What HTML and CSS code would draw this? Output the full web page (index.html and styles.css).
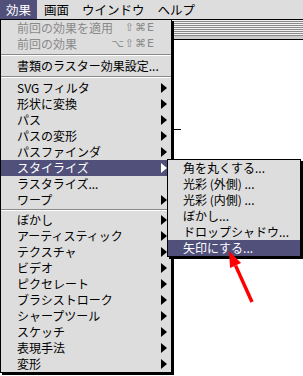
FILE: index.html
```html
<!DOCTYPE html>
<html lang="ja">
<head>
<meta charset="utf-8">
<link rel="stylesheet" href="styles.css">
</head>
<body>
<div class="screen">
  <div class="menubar">
    <span class="mb-item active">効果</span>
    <span class="mb-item">画面</span>
    <span class="mb-item">ウインドウ</span>
    <span class="mb-item">ヘルプ</span>
  </div>
  <div class="window">
    <div class="titlebar"><div class="stripes"></div></div>
    <div class="content"><div class="tick"></div></div>
  </div>

  <div class="menu main">
    <div class="item disabled"><span class="label">前回の効果を適用</span><span class="key">⇧⌘E</span></div>
    <div class="item disabled"><span class="label">前回の効果</span><span class="key">⌥⇧⌘E</span></div>
    <div class="sep"></div>
    <div class="item"><span class="label">書類のラスター効果設定...</span></div>
    <div class="sep"></div>
    <div class="item"><span class="label">SVG フィルタ</span><span class="arrow"></span></div>
    <div class="item"><span class="label">形状に変換</span><span class="arrow"></span></div>
    <div class="item"><span class="label">パス</span><span class="arrow"></span></div>
    <div class="item"><span class="label">パスの変形</span><span class="arrow"></span></div>
    <div class="item"><span class="label">パスファインダ</span><span class="arrow"></span></div>
    <div class="item hl"><span class="label">スタイライズ</span><span class="arrow"></span></div>
    <div class="item"><span class="label">ラスタライズ...</span></div>
    <div class="item"><span class="label">ワープ</span><span class="arrow"></span></div>
    <div class="sep narrow"></div>
    <div class="item"><span class="label">ぼかし</span><span class="arrow"></span></div>
    <div class="item"><span class="label">アーティスティック</span><span class="arrow"></span></div>
    <div class="item"><span class="label">テクスチャ</span><span class="arrow"></span></div>
    <div class="item"><span class="label">ビデオ</span><span class="arrow"></span></div>
    <div class="item"><span class="label">ピクセレート</span><span class="arrow"></span></div>
    <div class="item"><span class="label">ブラシストローク</span><span class="arrow"></span></div>
    <div class="item"><span class="label">シャープツール</span><span class="arrow"></span></div>
    <div class="item"><span class="label">スケッチ</span><span class="arrow"></span></div>
    <div class="item"><span class="label">表現手法</span><span class="arrow"></span></div>
    <div class="item"><span class="label">変形</span><span class="arrow"></span></div>
  </div>

  <div class="menu sub">
    <div class="item"><span class="label">角を丸くする...</span></div>
    <div class="item"><span class="label">光彩 (外側) ...</span></div>
    <div class="item"><span class="label">光彩 (内側) ...</span></div>
    <div class="item"><span class="label">ぼかし...</span></div>
    <div class="item"><span class="label">ドロップシャドウ...</span></div>
    <div class="item hl"><span class="label">矢印にする...</span></div>
  </div>

  <svg class="pointer" width="303" height="376" viewBox="0 0 303 376">
    <line x1="235.6" y1="265.6" x2="252" y2="302" stroke="#ff0000" stroke-width="3.5"/>
    <polygon points="229,251 230.1,268.1 241.1,263.1" fill="#ff0000"/>
  </svg>
</div>
</body>
</html>
```

FILE: styles.css
```css
html, body {
  margin: 0;
  padding: 0;
  background: #ffffff;
}

.screen {
  position: relative;
  width: 303px;
  height: 376px;
  overflow: hidden;
  font-family: "Noto Sans CJK JP", "Noto Sans", sans-serif;
  font-size: 12px;
  color: #000;
}

.menubar {
  display: flex;
  height: 19px;
  background: #dddddd;
  border-bottom: 1px solid #000;
  gap: 1px;
}

.mb-item {
  padding: 0 6px;
  line-height: 19px;
  font-size: 12.5px;
}

.mb-item.active {
  background: #50507a;
  color: #fff;
}

.window {
  display: flex;
  flex-direction: column;
  height: 356px;
}

.titlebar {
  height: 20px;
  background: #cccccc;
  border-bottom: 1px solid #000;
  box-sizing: border-box;
}

.stripes {
  height: 16px;
  background: repeating-linear-gradient(to bottom, #f2f2f2 0, #f2f2f2 1px, #8a8a8a 1px, #8a8a8a 2px);
}

.content {
  flex: 1;
  background: #fff;
  padding-top: 89px;
  padding-left: 173px;
}

.tick {
  width: 8px;
  height: 1px;
  background: #000;
}

.menu {
  position: absolute;
  background: #dddddd;
  border: 1px solid #000;
  box-shadow: 2px 2px 0 #000;
  box-sizing: border-box;
}

.menu.main {
  left: 0;
  top: 19px;
  width: 172px;
}

.menu.sub {
  left: 167px;
  top: 159px;
  width: 134px;
}

.item {
  display: flex;
  align-items: center;
  height: 16px;
  line-height: 16px;
  padding-left: 16px;
  padding-right: 4px;
  white-space: nowrap;
}

.menu.sub .item {
  padding-left: 15px;
}

.item .label {
  flex: 1;
}

.item.disabled {
  color: #8a8a8a;
}

.item .key {
  font-family: "DejaVu Sans", sans-serif;
  font-size: 11px;
  letter-spacing: 1px;
  margin-right: 12px;
}

.item .arrow {
  width: 0;
  height: 0;
  border-left: 6px solid #000;
  border-top: 5px solid transparent;
  border-bottom: 5px solid transparent;
}

.item.hl {
  background: #50507a;
  color: #fff;
}

.item.hl .arrow {
  border-left-color: #fff;
}

.sep {
  height: 6px;
  box-sizing: border-box;
  padding-top: 2px;
}

.sep.narrow {
  height: 4px;
  padding-top: 1px;
}

.sep::before {
  content: "";
  display: block;
  height: 1px;
  background: #8a8a8a;
}

.sep::after {
  content: "";
  display: block;
  height: 1px;
  background: #fff;
}

.pointer {
  position: absolute;
  left: 0;
  top: 0;
}
```
